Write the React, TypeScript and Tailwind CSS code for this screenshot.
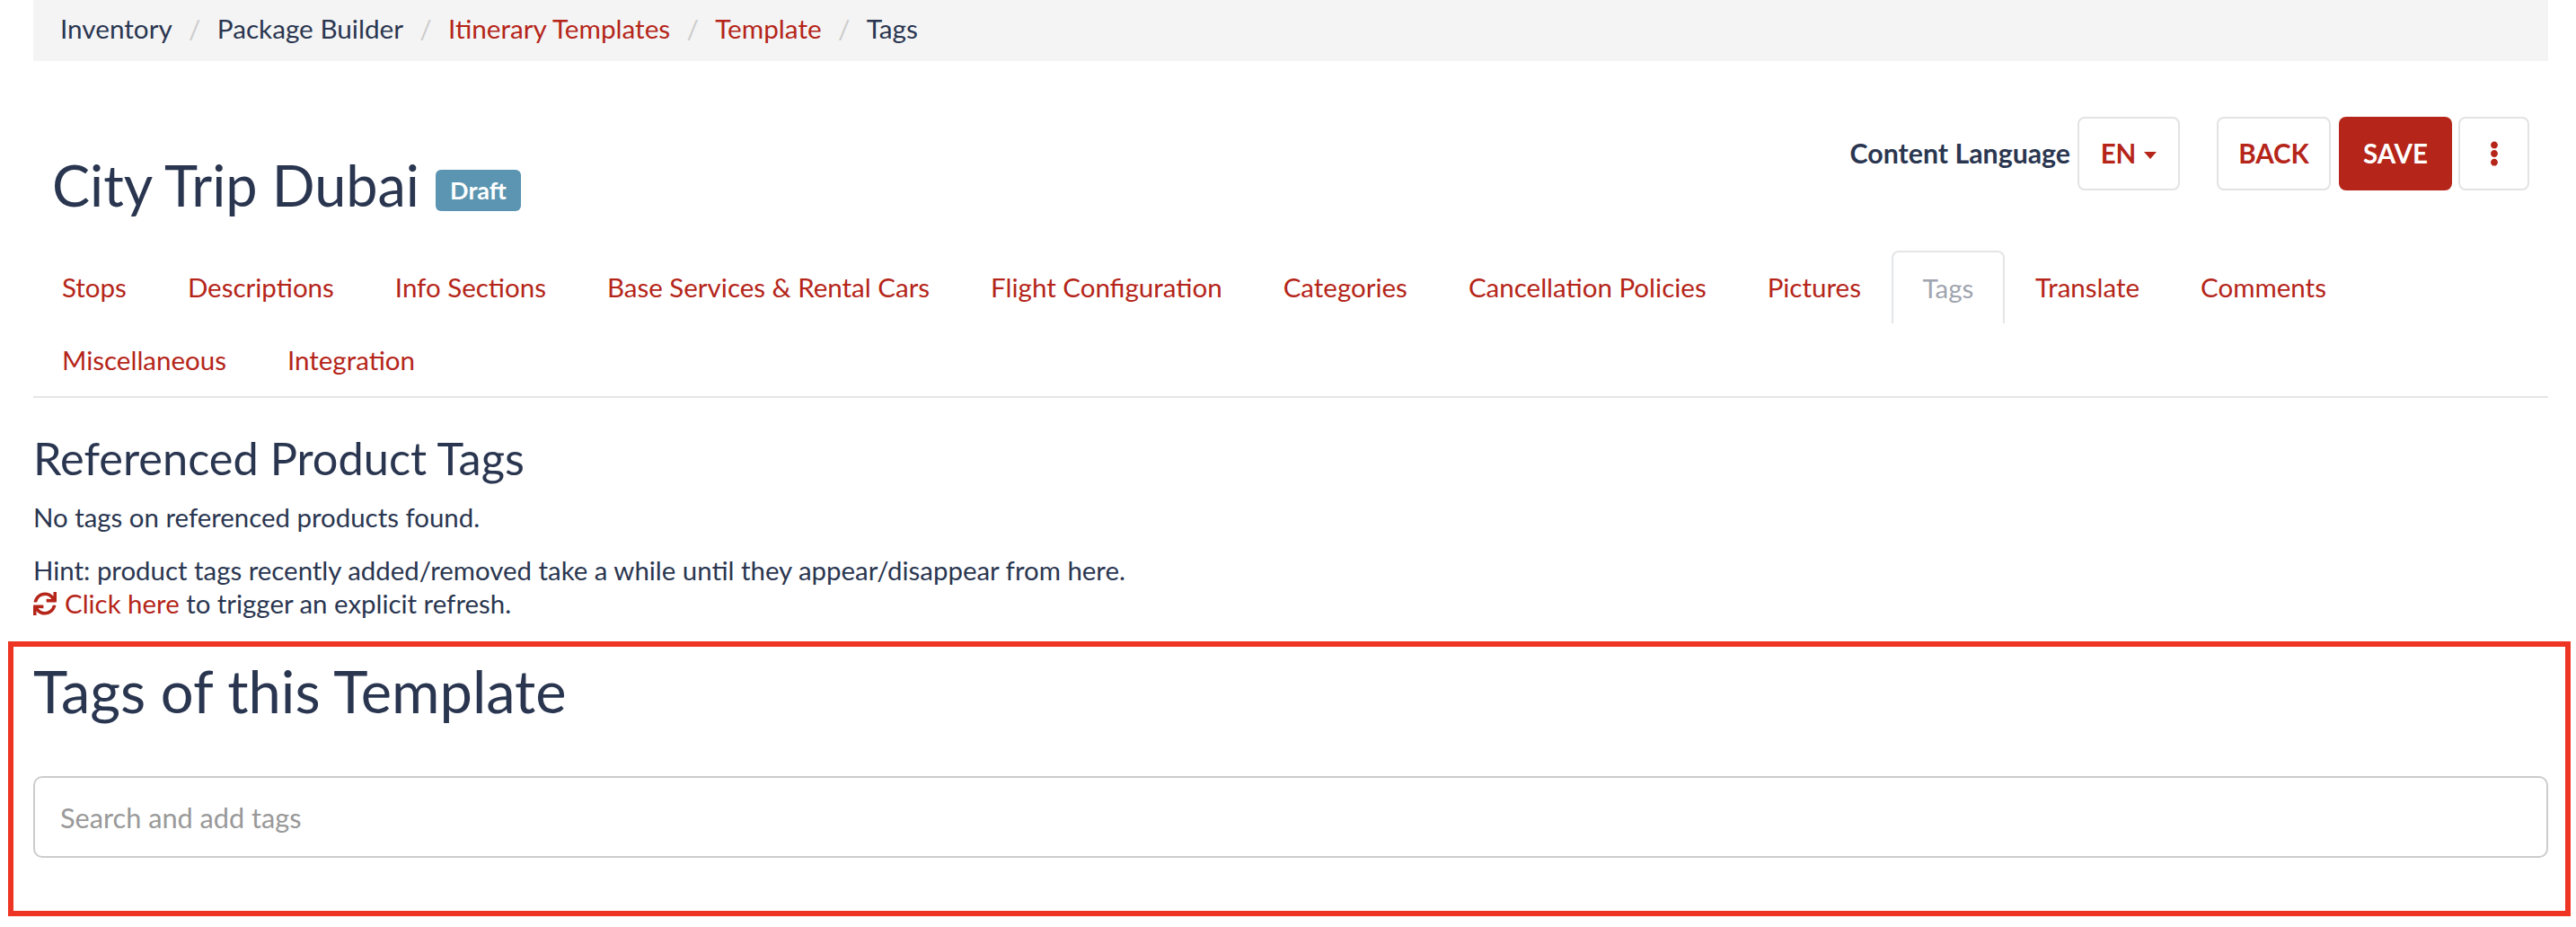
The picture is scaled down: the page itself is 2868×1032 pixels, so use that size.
import { FaEllipsisV, FaSync } from "react-icons/fa";

const tabsRowOne = [
  "Stops",
  "Descriptions",
  "Info Sections",
  "Base Services & Rental Cars",
  "Flight Configuration",
  "Categories",
  "Cancellation Policies",
  "Pictures",
  "Tags",
  "Translate",
  "Comments",
];

function Tab({ label }: { label: string }) {
  if (label === "Tags") {
    return (
      <div className="flex h-[81px] w-[126px] items-center justify-center rounded-t-lg border-2 border-b-0 border-[#e4e5e7] pt-[2px] text-[#a0a5b0]">
        {label}
      </div>
    );
  }
  return <div className="flex h-[81px] items-center px-[34px] pt-[2px] text-[#b52519]">{label}</div>;
}

function Crumb({ label, link, last }: { label: string; link?: boolean; last?: boolean }) {
  return (
    <>
      <span className={link ? "text-[#b52519]" : ""}>{label}</span>
      {!last && <span className="w-[50px] text-center text-[#ccc]">/</span>}
    </>
  );
}

export default function App() {
  return (
    <div className="relative h-[1032px] w-[2868px] overflow-hidden bg-white pr-[31px] pl-[37px] font-['Lato','Liberation_Sans',sans-serif] text-[29.5px] text-[#2a3650]">
      {/* breadcrumb */}
      <div className="flex h-[68px] items-center bg-[#f4f4f4] px-[30px] pb-[3px] text-[29.7px]">
        <Crumb label="Inventory" />
        <Crumb label="Package Builder" />
        <Crumb label="Itinerary Templates" link />
        <Crumb label="Template" link />
        <Crumb label="Tags" last />
      </div>

      {/* title row */}
      <div className="flex h-[211px] justify-between pr-[21px] pl-[21px]">
        <div className="flex items-center gap-[18px] pt-[64px]">
          <h1 className="text-[63px] leading-none font-normal">City Trip Dubai</h1>
          <span className="mt-[13px] flex h-[46px] w-[95px] items-center justify-center rounded-md bg-[#5b95b1] text-[27px] font-bold text-white">
            Draft
          </span>
        </div>
        <div className="flex items-start pt-[62px]">
          <span className="mr-[8px] flex h-[82px] items-center text-[30.3px] font-bold">Content Language</span>
          <button className="flex h-[82px] w-[114px] items-center justify-center gap-[9px] rounded-lg border-2 border-[#e3e3e3] font-bold text-[#b52519]">
            EN
            <span className="mt-[3px] border-x-[7px] border-t-[8px] border-x-transparent border-t-[#b52519]" />
          </button>
          <button className="ml-[41px] h-[82px] w-[127px] rounded-lg border-2 border-[#e3e3e3] font-bold text-[#b52519]">
            BACK
          </button>
          <button className="ml-[9px] h-[82px] w-[126px] rounded-lg bg-[#b52519] font-bold text-white">
            SAVE
          </button>
          <button className="ml-[7px] flex h-[82px] w-[79px] items-center justify-center rounded-lg border-2 border-[#e3e3e3] text-[#b52519]">
            <FaEllipsisV className="h-[28px] w-[28px]" />
          </button>
        </div>
      </div>

      {/* tabs */}
      <div className="border-b-2 border-[#e4e5e7]">
        <div className="-ml-[2px] flex">
          {tabsRowOne.map((t) => (
            <Tab key={t} label={t} />
          ))}
        </div>
        <div className="-ml-[2px] flex">
          <Tab label="Miscellaneous" />
          <Tab label="Integration" />
        </div>
      </div>

      {/* referenced tags */}
      <h2 className="mt-[37px] text-[50.5px] leading-[60px] font-normal">Referenced Product Tags</h2>
      <div className="text-[29.4px]">
        <p className="mt-[16px] leading-[40px]">No tags on referenced products found.</p>
        <p className="mt-[21px] leading-[36px]">Hint: product tags recently added/removed take a while until they appear/disappear from here.</p>
        <p className="leading-[38px]">
          <FaSync className="mr-[9px] inline h-[26px] w-[26px] align-[-2px] text-[#b52519]" />
          <span className="text-[#b52519]">Click here</span> to trigger an explicit refresh.
        </p>
      </div>

      {/* template tags */}
      <h2 className="mt-[38px] text-[65px] leading-[80px] font-normal">Tags of this Template</h2>
      <input
        placeholder="Search and add tags"
        className="mt-[55px] h-[91px] w-full rounded-[10px] border-2 border-[#ccc] px-[28px] pt-[2px] text-[30.7px] placeholder:text-[#999]"
      />

      {/* highlight */}
      <div className="absolute top-[714px] left-[9px] h-[306px] w-[2853px] border-[6px] border-[#ee3524]" />
    </div>
  );
}
